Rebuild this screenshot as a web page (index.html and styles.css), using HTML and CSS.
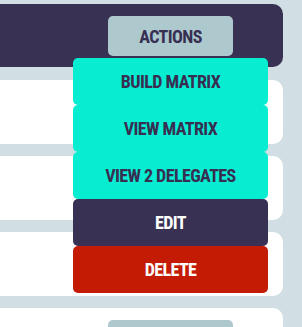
FILE: index.html
```html
<!DOCTYPE html>
<html lang="en">
<head>
	<meta charset="UTF-8">
	<title>Campaigns</title>
	<link rel="stylesheet" href="styles.css">
</head>
<body>
	<div class="list">
		<div class="row head">
			<div class="actions">
				<button class="act-btn">ACTIONS</button>
				<div class="menu">
					<button class="item teal">BUILD MATRIX</button>
					<button class="item teal">VIEW MATRIX</button>
					<button class="item teal">VIEW 2 DELEGATES</button>
					<button class="item dark">EDIT</button>
					<button class="item red">DELETE</button>
				</div>
			</div>
		</div>
		<div class="row card"></div>
		<div class="row card"></div>
		<div class="row card"></div>
		<div class="row card">
			<div class="actions"><button class="act-btn"></button></div>
		</div>
	</div>
</body>
</html>
```

FILE: styles.css
```css
html, body{
	margin: 0;
	padding: 0;
	background: #d1dee3;
	overflow: hidden;
	height: 327px;
}
.list{
	display: flex;
	flex-direction: column;
	gap: 12px;
	padding-top: 4px;
	margin-right: 19px;
}
.row{
	height: 64px;
	border-radius: 0 10px 10px 0;
	box-sizing: border-box;
	padding: 12px 0 0 108px;
}
.head{
	background: #383154;
	height: 63px;
	margin-bottom: 1px;
}
.card{
	background: #fff;
}
.actions{
	position: relative;
	width: 125px;
}
button{
	font-family: "Roboto Condensed", Roboto, sans-serif;
	font-weight: 700;
	font-size: 18px;
	letter-spacing: -0.6px;
	border: none;
	padding: 0;
	cursor: pointer;
	display: flex;
	align-items: center;
	justify-content: center;
}
.act-btn{
	width: 125px;
	height: 40px;
	border-radius: 5px;
	background: #adc9ce;
	color: #372f52;
}
.menu{
	position: absolute;
	top: 42px;
	left: -35px;
	width: 195px;
	display: flex;
	flex-direction: column;
	z-index: 5;
}
.item{
	width: 195px;
	height: 47px;
	border-radius: 5px;
}
.teal{
	background: #07edd1;
	color: #372f52;
}
.dark{
	background: #383154;
	color: #fff;
}
.red{
	background: #c31b04;
	color: #fff;
}
```
